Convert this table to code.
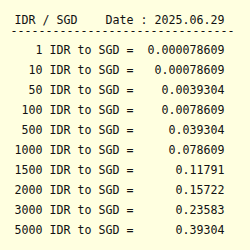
const rows = [
  ["1", "0.000078609"],
  ["10", "0.00078609"],
  ["50", "0.0039304"],
  ["100", "0.0078609"],
  ["500", "0.039304"],
  ["1000", "0.078609"],
  ["1500", "0.11791"],
  ["2000", "0.15722"],
  ["3000", "0.23583"],
  ["5000", "0.39304"],
]

export default function App() {
  return (
    <div className="w-[250px] h-[250px] bg-[#ffffe0] text-[#111] font-['DejaVu_Sans_Mono',monospace] text-[11.63px] whitespace-pre overflow-hidden">
      <div className="pt-[13px] pl-[14.5px] leading-[14px]">{"IDR / SGD    Date : 2025.06.29"}</div>
      <div className="pl-[10.5px] leading-[8px] h-[8px] mb-[5px]">{"-".repeat(32)}</div>
      <div className="pl-[14.5px] leading-[20px]">
        {rows.map(([n, v]) => (
          <div key={n}>{n.padStart(4, " ") + " IDR to SGD =" + v.padStart(13, " ")}</div>
        ))}
      </div>
    </div>
  )
}
